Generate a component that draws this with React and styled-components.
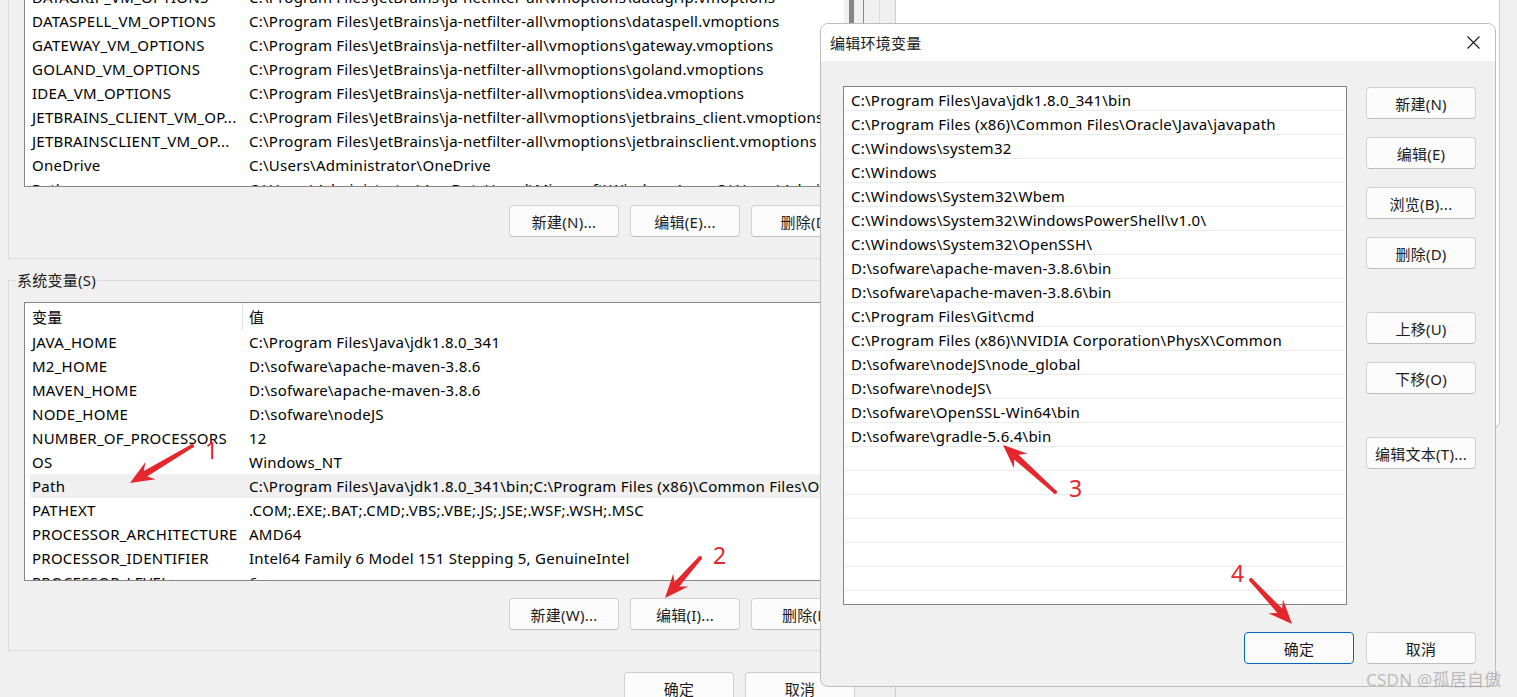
import React from "react";
import styled, { createGlobalStyle } from "styled-components";

const GlobalStyle = createGlobalStyle`
  html, body { margin: 0; padding: 0; background: #f0f0f0; overflow: hidden; }
  body {
    font-family: "Noto Sans", "Noto Sans CJK SC", sans-serif;
    font-size: 15px;
    letter-spacing: 0.25px;
    color: #000;
  }
  * { box-sizing: border-box; }
`;

const Desktop = styled.div`
  position: relative;
  width: 1517px;
  height: 697px;
  overflow: hidden;
  background: #f0f0f0;
  display: flex;
  align-items: flex-start;
`;

const MainWindow = styled.div`
  flex: 0 0 896px;
  margin-top: -74px;
  height: 800px;
  padding: 0 15px 0 8px;
  background: #f0f0f0;
  border-right: 1px solid #cfcfcf;
  display: flex;
  flex-direction: column;
`;

const BackWindow = styled.div`
  flex: 0 0 604px;
  height: 429px;
  background: #fff;
  border-right: 1px solid #cdcdcd;
  border-bottom: 1px solid #cdcdcd;
  border-bottom-right-radius: 8px;
`;

const GroupBox = styled.fieldset`
  margin: ${(p) => p.$mt || 0}px 0 0 0;
  padding: ${(p) => p.$pt || 11}px 15px ${(p) => p.$pb || 20}px 15px;
  border: 1px solid #dadada;
  min-width: 0;
`;

const Legend = styled.legend`
  margin-left: -8px;
  padding: 0 1px;
  font-size: 15px;
  line-height: 20px;
  color: #1a1a1a;
`;

const ListBox = styled.div`
  height: ${(p) => p.$h}px;
  border: 1px solid #868686;
  background: #fff;
  display: flex;
  overflow: hidden;
`;

const ListMain = styled.div`
  flex: 1;
  min-width: 0;
  display: flex;
  flex-direction: column;
  overflow: hidden;
`;

const ScrollTrack = styled.div`
  flex: 0 0 19px;
  background: #f0f0f0;
  padding-left: 5px;
`;

const ScrollThumb = styled.div`
  width: 5px;
  height: ${(p) => p.$h}px;
  margin-top: ${(p) => p.$top}px;
  background: #858585;
  border-radius: 3px;
`;

const HeaderRow = styled.div`
  flex: none;
  height: 27px;
  margin-left: 5px;
  display: grid;
  grid-template-columns: 212px 1fr;
`;

const HeaderCell = styled.div`
  display: flex;
  align-items: center;
  padding-left: ${(p) => (p.$value ? 6 : 2)}px;
  border-left: ${(p) => (p.$value ? "1px solid #e3e3e3" : "none")};
  white-space: nowrap;
`;

const DataRow = styled.div`
  flex: none;
  height: 24px;
  margin-left: 5px;
  display: grid;
  grid-template-columns: 212px 1fr;
  align-items: center;
  background: ${(p) => (p.$hot ? "#f0f0f0" : "transparent")};
`;

const Cell = styled.div`
  padding-left: ${(p) => (p.$value ? 7 : 2)}px;
  white-space: nowrap;
  overflow: hidden;
  line-height: 24px;
`;

const ButtonRow = styled.div`
  display: flex;
  justify-content: flex-end;
  gap: 11px;
  margin-top: ${(p) => p.$mt}px;
  padding-right: ${(p) => p.$pr || 0}px;
`;

const Button = styled.button`
  flex: none;
  width: 110px;
  height: 32px;
  margin-top: ${(p) => p.$push || 0}px;
  padding: 0;
  border: 1px solid ${(p) => (p.$primary ? "#0067c0" : "#d0d0d0")};
  border-bottom-color: ${(p) => (p.$primary ? "#0067c0" : "#bdbdbd")};
  border-radius: 4px;
  background: #fcfcfc;
  font-family: inherit;
  font-size: 15px;
  letter-spacing: 0.25px;
  color: #1b1b1b;
  white-space: nowrap;
`;

const Dialog = styled.section`
  position: absolute;
  left: 820px;
  top: 23px;
  width: 676px;
  height: 664px;
  border: 1px solid #bcbcbc;
  border-radius: 8px;
  overflow: hidden;
  display: flex;
  flex-direction: column;
  background: #f0f0f0;
`;

const TitleBar = styled.div`
  flex: none;
  height: 37px;
  background: #fff;
  display: flex;
  align-items: center;
  padding-left: 9px;
`;

const Title = styled.span`
  flex: 1;
  font-size: 15px;
  color: #1a1a1a;
`;

const CloseButton = styled.button`
  width: 44px;
  height: 37px;
  border: none;
  background: transparent;
  display: flex;
  align-items: center;
  justify-content: center;
  padding: 0;
`;

const DialogBody = styled.div`
  flex: 1;
  padding: 25px 19px 22px 22px;
  display: flex;
  flex-direction: column;
`;

const DialogMain = styled.div`
  display: flex;
  gap: 19px;
  align-items: flex-start;
`;

const PathList = styled.div`
  flex: none;
  width: 504px;
  height: 519px;
  border: 1px solid #848484;
  background: #fff;
  overflow: hidden;
`;

const PathRow = styled.div`
  height: 24px;
  margin: 0 1px;
  padding: 1px 0 0 6px;
  border-bottom: 1px solid #ebebeb;
  line-height: 24px;
  white-space: nowrap;
`;

const SideButtons = styled.div`
  display: flex;
  flex-direction: column;
  gap: 18px;
  padding-top: 1px;
`;

const DialogFooter = styled.div`
  display: flex;
  justify-content: flex-end;
  gap: 12px;
  margin-top: 27px;
`;

const Overlay = styled.svg`
  position: absolute;
  left: 0;
  top: 0;
  width: 1517px;
  height: 697px;
  pointer-events: none;
`;

const Mark = styled.text`
  font-family: "Noto Sans", sans-serif;
  font-size: 23px;
  fill: #e5262d;
`;

const Watermark = styled.div`
  position: absolute;
  left: 1366px;
  top: 666px;
  font-family: "Noto Sans", "Noto Sans CJK SC", sans-serif;
  font-size: 17px;
  color: rgba(140, 140, 140, 0.55);
  white-space: nowrap;
  pointer-events: none;
`;

const JB = "C:\\Program Files\\JetBrains\\ja-netfilter-all\\vmoptions\\";

const userVars = [
  ["DATAGRIP_VM_OPTIONS", JB + "datagrip.vmoptions"],
  ["DATASPELL_VM_OPTIONS", JB + "dataspell.vmoptions"],
  ["GATEWAY_VM_OPTIONS", JB + "gateway.vmoptions"],
  ["GOLAND_VM_OPTIONS", JB + "goland.vmoptions"],
  ["IDEA_VM_OPTIONS", JB + "idea.vmoptions"],
  ["JETBRAINS_CLIENT_VM_OP...", JB + "jetbrains_client.vmoptions"],
  ["JETBRAINSCLIENT_VM_OP...", JB + "jetbrainsclient.vmoptions"],
  ["OneDrive", "C:\\Users\\Administrator\\OneDrive"],
  ["Path", "C:\\Users\\Administrator\\AppData\\Local\\Microsoft\\WindowsApps;C:\\Users\\Administrator\\AppData"],
];

const sysVars = [
  ["JAVA_HOME", "C:\\Program Files\\Java\\jdk1.8.0_341"],
  ["M2_HOME", "D:\\sofware\\apache-maven-3.8.6"],
  ["MAVEN_HOME", "D:\\sofware\\apache-maven-3.8.6"],
  ["NODE_HOME", "D:\\sofware\\nodeJS"],
  ["NUMBER_OF_PROCESSORS", "12"],
  ["OS", "Windows_NT"],
  ["Path", "C:\\Program Files\\Java\\jdk1.8.0_341\\bin;C:\\Program Files (x86)\\Common Files\\Oracle\\Java\\javapath;C:\\Windows", true],
  ["PATHEXT", ".COM;.EXE;.BAT;.CMD;.VBS;.VBE;.JS;.JSE;.WSF;.WSH;.MSC"],
  ["PROCESSOR_ARCHITECTURE", "AMD64"],
  ["PROCESSOR_IDENTIFIER", "Intel64 Family 6 Model 151 Stepping 5, GenuineIntel"],
  ["PROCESSOR_LEVEL", "6"],
];

const paths = [
  "C:\\Program Files\\Java\\jdk1.8.0_341\\bin",
  "C:\\Program Files (x86)\\Common Files\\Oracle\\Java\\javapath",
  "C:\\Windows\\system32",
  "C:\\Windows",
  "C:\\Windows\\System32\\Wbem",
  "C:\\Windows\\System32\\WindowsPowerShell\\v1.0\\",
  "C:\\Windows\\System32\\OpenSSH\\",
  "D:\\sofware\\apache-maven-3.8.6\\bin",
  "D:\\sofware\\apache-maven-3.8.6\\bin",
  "C:\\Program Files\\Git\\cmd",
  "C:\\Program Files (x86)\\NVIDIA Corporation\\PhysX\\Common",
  "D:\\sofware\\nodeJS\\node_global",
  "D:\\sofware\\nodeJS\\",
  "D:\\sofware\\OpenSSL-Win64\\bin",
  "D:\\sofware\\gradle-5.6.4\\bin",
  "", "", "", "", "", "", "",
];

function arrowPoints(x1, y1, x2, y2) {
  const dx = x2 - x1;
  const dy = y2 - y1;
  const L = Math.hypot(dx, dy);
  const ux = dx / L;
  const uy = dy / L;
  const px = -uy;
  const py = ux;
  const headLen = 24;
  const headW = 10;
  const tailW = 1.8;
  const neckW = 3.2;
  const bx = x2 - ux * headLen;
  const by = y2 - uy * headLen;
  const nx = x2 - ux * (headLen - 6);
  const ny = y2 - uy * (headLen - 6);
  const pts = [
    [x1 + px * tailW, y1 + py * tailW],
    [nx + px * neckW, ny + py * neckW],
    [bx + px * headW, by + py * headW],
    [x2, y2],
    [bx - px * headW, by - py * headW],
    [nx - px * neckW, ny - py * neckW],
    [x1 - px * tailW, y1 - py * tailW],
  ];
  return pts.map((p) => p.map((v) => v.toFixed(1)).join(",")).join(" ");
}

function Arrow({ from, to }) {
  return (
    <g>
      <polygon points={arrowPoints(from[0], from[1], to[0], to[1])} fill="#e5262d" />
      <circle cx={from[0]} cy={from[1]} r="2" fill="#e5262d" />
    </g>
  );
}

function VarList({ rows, height, thumbTop, thumbH }) {
  return (
    <ListBox $h={height}>
      <ListMain>
        <HeaderRow>
          <HeaderCell>变量</HeaderCell>
          <HeaderCell $value>值</HeaderCell>
        </HeaderRow>
        {rows.map(([name, value, hot], i) => (
          <DataRow key={i} $hot={hot}>
            <Cell>{name}</Cell>
            <Cell $value>{value}</Cell>
          </DataRow>
        ))}
      </ListMain>
      <ScrollTrack>
        <ScrollThumb $top={thumbTop} $h={thumbH} />
      </ScrollTrack>
    </ListBox>
  );
}

export default function App() {
  return (
    <>
      <GlobalStyle />
      <Desktop>
        <MainWindow>
          <GroupBox $pb={21}>
            <Legend>Administrator 的用户变量(U)</Legend>
            <VarList rows={userVars} height={230} thumbTop={2} thumbH={150} />
            <ButtonRow $mt={18} $pr={3}>
              <Button>新建(N)...</Button>
              <Button>编辑(E)...</Button>
              <Button>删除(D)</Button>
            </ButtonRow>
          </GroupBox>
          <GroupBox $mt={11} $pt={12}>
            <Legend>系统变量(S)</Legend>
            <VarList rows={sysVars} height={279} thumbTop={30} thumbH={120} />
            <ButtonRow $mt={17} $pr={3}>
              <Button>新建(W)...</Button>
              <Button>编辑(I)...</Button>
              <Button>删除(L)</Button>
            </ButtonRow>
          </GroupBox>
          <ButtonRow $mt={21} $pr={25}>
            <Button>确定</Button>
            <Button>取消</Button>
          </ButtonRow>
        </MainWindow>
        <BackWindow />

        <Dialog>
          <TitleBar>
            <Title>编辑环境变量</Title>
            <CloseButton aria-label="关闭">
              <svg width="13" height="13" viewBox="0 0 13 13">
                <path d="M0.5 0.5 L12.5 12.5 M12.5 0.5 L0.5 12.5" stroke="#1a1a1a" strokeWidth="1.1" fill="none" />
              </svg>
            </CloseButton>
          </TitleBar>
          <DialogBody>
            <DialogMain>
              <PathList>
                {paths.map((p, i) => (
                  <PathRow key={i}>{p}</PathRow>
                ))}
              </PathList>
              <SideButtons>
                <Button>新建(N)</Button>
                <Button>编辑(E)</Button>
                <Button>浏览(B)...</Button>
                <Button>删除(D)</Button>
                <Button $push={25}>上移(U)</Button>
                <Button>下移(O)</Button>
                <Button $push={25}>编辑文本(T)...</Button>
              </SideButtons>
            </DialogMain>
            <DialogFooter>
              <Button $primary>确定</Button>
              <Button>取消</Button>
            </DialogFooter>
          </DialogBody>
        </Dialog>

        <Overlay viewBox="0 0 1517 697">
          <Arrow from={[192, 446]} to={[130, 483]} />
          <Mark x="205" y="459">1</Mark>
          <Arrow from={[700, 558]} to={[665, 598]} />
          <Mark x="713" y="564">2</Mark>
          <Arrow from={[1055, 492]} to={[1003, 445]} />
          <Mark x="1069" y="497">3</Mark>
          <Arrow from={[1251, 580]} to={[1292, 624]} />
          <Mark x="1231" y="582">4</Mark>
        </Overlay>
        <Watermark>CSDN @孤居自傲</Watermark>
      </Desktop>
    </>
  );
}
